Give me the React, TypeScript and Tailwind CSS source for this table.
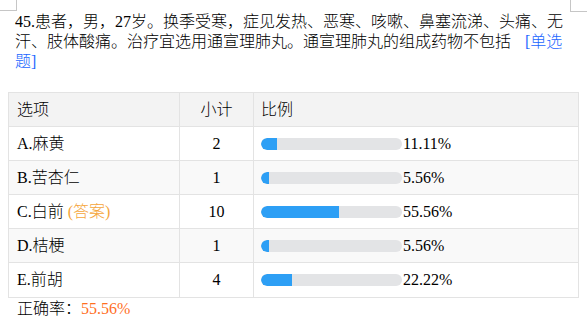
const rows = [
  { label: "A.麻黄", count: 2, pct: 11.11 },
  { label: "B.苦杏仁", count: 1, pct: 5.56 },
  { label: "C.白前", count: 10, pct: 55.56, answer: true },
  { label: "D.桔梗", count: 1, pct: 5.56 },
  { label: "E.前胡", count: 4, pct: 22.22 },
];

const App = () => {
  return (
    <div
      className="relative w-[587px] h-[319px] overflow-hidden bg-white text-black text-[16px] leading-[20px] font-light"
      style={{ fontFamily: '"Liberation Serif", "Noto Sans CJK SC", serif' }}
    >
      {/* page corner marks */}
      <div className="absolute left-0 top-0 w-[17px] h-[11px] border-r border-b border-[#c6c6c6]" />
      <div className="absolute right-0 top-0 w-[17px] h-[12px] border-l border-b border-[#c6c6c6]" />

      <div className="pt-[12px] pl-[15px] w-[571px]">
        45.患者，男，27岁。换季受寒，症见发热、恶寒、咳嗽、鼻塞流涕、头痛、无汗、肢体酸痛。治疗宜选用通宣理肺丸。通宣理肺丸的组成药物不包括
        <span className="ml-[14px] text-[#1a66ff]">[单选题]</span>
      </div>

      <div className="ml-[8px] mt-[20px] w-[571px] border border-[#e3e3e3]">
        <div className="flex h-[34px] border-b border-[#e3e3e3] bg-[#f3f3f3]">
          <div className="w-[170px] pl-2 flex items-center">选项</div>
          <div className="w-[74px] border-l border-[#e3e3e3] flex items-center justify-center">小计</div>
          <div className="flex-1 border-l border-[#e3e3e3] pl-[7px] flex items-center">比例</div>
        </div>
        {rows.map((r, i) => (
          <div
            key={i}
            className={`flex h-[34px] ${i < rows.length - 1 ? "border-b border-[#e3e3e3]" : "h-[33px]"} ${i % 2 === 1 ? "bg-[#f9f9f9]" : "bg-white"}`}
          >
            <div className="w-[170px] pl-2 flex items-center">
              {r.label}
              {r.answer && <span className="ml-[4px] text-[#f5a53a]">(答案)</span>}
            </div>
            <div className="w-[74px] border-l border-[#e3e3e3] flex items-center justify-center">{r.count}</div>
            <div className="flex-1 border-l border-[#e3e3e3] pl-[7px] flex items-center">
              <div className="w-[141px] h-[12px] rounded-full bg-[#e3e4e6] overflow-hidden">
                <div className="h-full bg-[#2d9ff5] rounded-l-full" style={{ width: `${r.pct}%` }} />
              </div>
              <span className="ml-[1px]">{r.pct.toFixed(2)}%</span>
            </div>
          </div>
        ))}
      </div>

      <div className="pl-[17px] pt-[1px]">
        正确率：<span className="text-[#ff6f1f]">55.56%</span>
      </div>
    </div>
  );
};

export default App;
